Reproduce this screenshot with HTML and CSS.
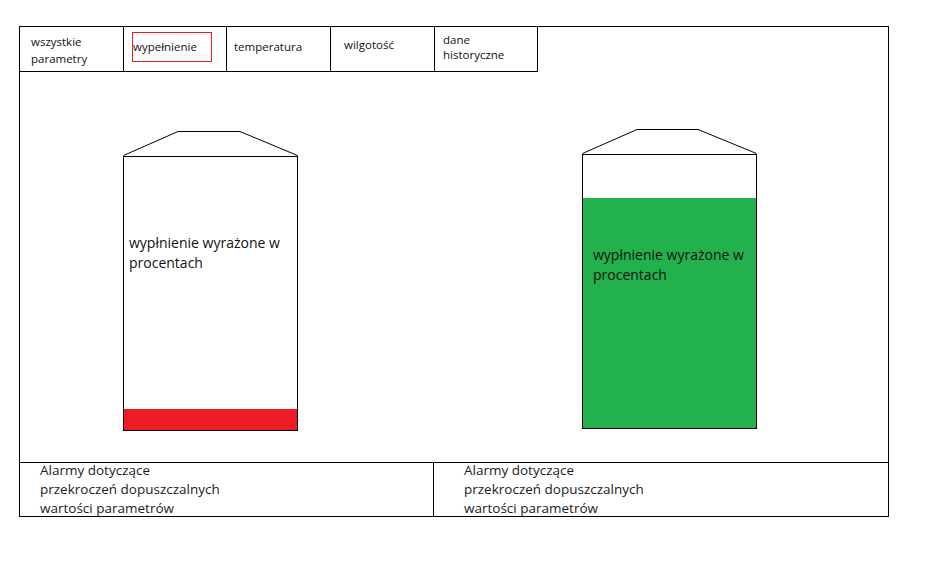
FILE: index.html
```html
<!DOCTYPE html>
<html lang="pl">
<head>
<meta charset="utf-8">
<title>Zbiorniki</title>
<link rel="stylesheet" href="styles.css">
</head>
<body>
<div class="frame">
  <nav class="tabs">
    <div class="tab tab--all">wszystkie<br>parametry</div>
    <div class="tab tab--fill"><span class="tab-active">wypełnienie</span></div>
    <div class="tab tab--temp">temperatura</div>
    <div class="tab tab--hum">wilgotość</div>
    <div class="tab tab--hist">dane<br>historyczne</div>
  </nav>
  <main class="main">
    <div class="tank tank--one">
      <svg class="roof" width="175" height="25" viewBox="0 0 175 25">
        <polyline points="0.5,24.5 55,0.5 117,0.5 174.5,24.5" fill="none" stroke="#000" stroke-width="1"/>
      </svg>
      <div class="body">
        <div class="fill fill--red" style="height:7.7%"></div>
        <div class="label label--one">wypłnienie wyrażone w procentach</div>
      </div>
    </div>
    <div class="tank tank--two">
      <svg class="roof" width="175" height="25" viewBox="0 0 175 25">
        <polyline points="0.5,24.5 55,0.5 116,0.5 174.5,24.5" fill="none" stroke="#000" stroke-width="1"/>
      </svg>
      <div class="body">
        <div class="fill fill--green" style="height:84.2%"></div>
        <div class="label label--two">wypłnienie wyrażone w procentach</div>
      </div>
    </div>
  </main>
  <footer class="footer">
    <div class="alarm alarm--left"><p>Alarmy dotyczące<br>przekroczeń dopuszczalnych<br>wartości parametrów</p></div>
    <div class="alarm alarm--right"><p>Alarmy dotyczące<br>przekroczeń dopuszczalnych<br>wartości parametrów</p></div>
  </footer>
</div>
</body>
</html>
```

FILE: styles.css
```css
html, body {
  margin: 0;
  padding: 0;
  background: #fff;
}

body {
  font-family: "Open Sans", "Noto Sans", sans-serif;
  color: #111;
}

.frame {
  margin: 26px 0 0 19px;
  width: 870px;
  height: 491px;
  box-sizing: border-box;
  border: 1px solid #000;
  display: flex;
  flex-direction: column;
}

.tabs {
  display: flex;
  width: 518px;
  height: 45px;
  box-sizing: border-box;
  border-bottom: 1px solid #000;
  flex: none;
}

.tab {
  width: 104px;
  box-sizing: border-box;
  border-right: 1px solid #000;
  font-size: 11.5px;
  line-height: 16px;
  padding-top: 5px;
}

.tab--all { padding-left: 11px; padding-top: 6px; line-height: 17px; }
.tab--fill { padding-left: 8px; width: 103px; }
.tab--temp { padding-left: 7px; padding-top: 12px; }
.tab--hum { padding-left: 13px; padding-top: 10px; }
.tab--hist { padding-left: 8px; width: 103px; line-height: 15px; }

.tab-active {
  display: flex;
  align-items: center;
  width: 80px;
  height: 30px;
  box-sizing: border-box;
  border: 1px solid #ed1c24;
  padding-left: 0;
  margin-top: 0;
}

.main {
  height: 390px;
  flex: none;
  display: flex;
  align-items: flex-start;
  padding: 57px 0 0 103px;
  box-sizing: border-box;
  gap: 284px;
}

.tank {
  width: 175px;
  display: flex;
  flex-direction: column;
}

.tank--one { margin-top: 2px; }

.roof {
  display: block;
}

.body {
  position: relative;
  height: 275px;
  box-sizing: border-box;
  border: 1px solid #000;
}

.fill {
  position: absolute;
  left: 0;
  right: 0;
  bottom: 0;
}

.fill--red { background: #ed1c24; }
.fill--green { background: #22b14c; }

.label {
  position: relative;
  font-size: 14px;
  line-height: 20px;
  color: #111;
}

.label--one { padding: 76px 0 0 5px; }
.label--two { padding: 90px 0 0 10px; }

.footer {
  flex: 1;
  display: flex;
  border-top: 1px solid #000;
}

.alarm {
  box-sizing: border-box;
  font-size: 13.5px;
  line-height: 19px;
  color: #1a1a1a;
}

.alarm p {
  margin: -2px 0 0 0;
}

.alarm--left {
  width: 414px;
  border-right: 1px solid #000;
  padding-left: 20px;
}

.alarm--right {
  flex: 1;
  padding-left: 30px;
}
```
